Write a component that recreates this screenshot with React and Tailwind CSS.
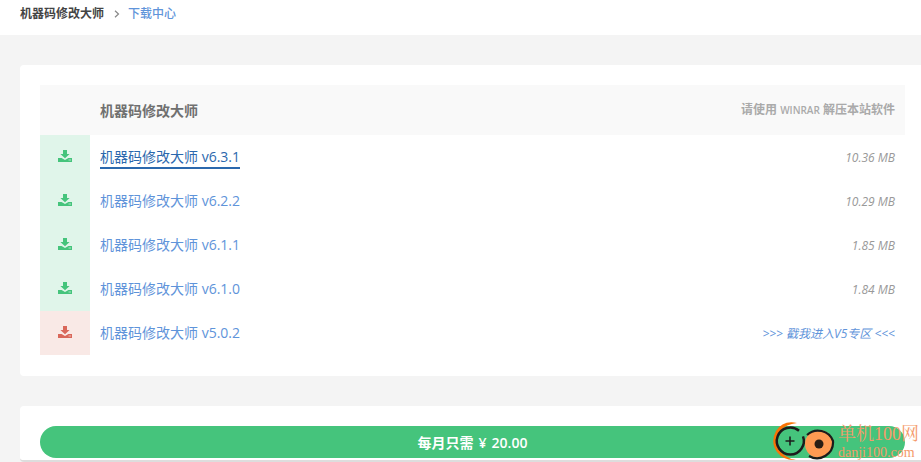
const FONT = "font-['Open_Sans','Noto_Sans_CJK_SC',sans-serif]";

const rows = [
  { name: "机器码修改大师 v6.3.1", size: "10.36 MB", active: true },
  { name: "机器码修改大师 v6.2.2", size: "10.29 MB" },
  { name: "机器码修改大师 v6.1.1", size: "1.85 MB" },
  { name: "机器码修改大师 v6.1.0", size: "1.84 MB" },
  { name: "机器码修改大师 v5.0.2", size: ">>> 戳我进入V5专区 <<<", old: true },
];

function DownloadIcon({ className }) {
  return (
    <svg viewBox="0 0 14 12" className={className} fill="currentColor">
      <path d="M5 0h4v4h2.6L7 8.2 2.4 4H5z" />
      <path d="M0 8h3.6L7 10l3.4-2H14v4H0z" />
      <rect x="10.5" y="9.6" width="2.5" height="0.8" fill="#ffffff" opacity="0.7" />
    </svg>
  );
}

function Row({ row }) {
  return (
    <div className="flex h-11 items-center">
      <div
        className={`flex h-11 w-[50px] shrink-0 items-center justify-center ${row.old ? "bg-[#f9e9e6] text-[#d9675a]" : "bg-[#e0f5ea] text-[#45c47c]"}`}
      >
        <DownloadIcon className="mb-[2px] h-3 w-[14px]" />
      </div>
      <a
        className={`ml-[10px] mt-[2px] text-[14px] leading-[20px] ${row.active ? "border-b-2 border-[#2b68ad] text-[#2b68ad]" : "border-b-2 border-transparent text-[#5f94da]"}`}
      >
        {row.name}
      </a>
      <span
        className={`ml-auto mr-[10px] mt-[1px] text-[12px] italic ${row.old ? "text-[#5f94da]" : "text-[#999999]"}`}
      >
        {row.size}
      </span>
    </div>
  );
}

function Watermark() {
  return (
    <div className="absolute bottom-0 right-0 h-[46px] w-[150px]">
      <svg width="88" height="46" viewBox="0 0 88 46" className="absolute left-0 top-0">
        <path d="M26 7Q12 4 5 15Q-1 26 6 36Q13 45 25 44Q13 42 8 33Q3 24 9 15Q15 8 26 7Z" fill="#f97306" />
        <path d="M32 20.4A13.5 13.5 0 1 1 28 14.7" fill="none" stroke="#1c1c1c" strokeWidth="2.5" />
        <path d="M14.5 25h9M19 20.5v9" stroke="#1c1c1c" strokeWidth="1.6" />
        <circle cx="48" cy="28" r="14" fill="#ff9a52" />
        <path d="M36 19 A16 16 0 0 1 62 25 A16 16 0 0 1 38 40" fill="none" stroke="#1c1c1c" strokeWidth="2.2" />
        <circle cx="48" cy="28" r="4.5" fill="#2b1d14" />
      </svg>
      <div className="absolute left-[67px] top-[8px] font-['Liberation_Serif','Noto_Serif_CJK_SC','Noto_Sans_CJK_SC',serif] text-[#f59a6a]">
        <div className="whitespace-nowrap text-[18px] leading-[20px]">单机100网</div>
        <div className="whitespace-nowrap text-[14px] leading-[17px]">danji100.com</div>
      </div>
    </div>
  );
}

export default function App() {
  return (
    <div className={`relative h-[462px] w-[921px] overflow-hidden bg-[#f4f4f4] ${FONT}`}>
      <div className="flex h-[35px] items-start bg-white pl-5 pt-[5px] text-[12px] leading-[17px]">
        <span className="font-semibold text-[#444444]">机器码修改大师</span>
        <svg viewBox="0 0 6 8" className="ml-[10px] mt-[5px] h-2 w-[6px]" fill="none" stroke="#888888" strokeWidth="1.2">
          <path d="M1 .7 4.5 4 1 7.3" />
        </svg>
        <span className="ml-[8px] font-medium text-[#5f94da]">下载中心</span>
      </div>

      <div className="ml-5 mt-[30px] rounded-l-[4px] bg-white pb-[21px] pl-5 pt-5 pr-4">
        <div className="flex h-[50px] items-center bg-[#f9f9f9] pl-[60px] pr-[10px]">
          <span className="text-[14px] font-semibold text-[#707070]">机器码修改大师</span>
          <span className="ml-auto text-[12px] font-semibold text-[#aaaaaa]">
            请使用 <span className="text-[10px]">WINRAR</span> 解压本站软件
          </span>
        </div>
        {rows.map((row) => (
          <Row key={row.name} row={row} />
        ))}
      </div>

      <div className="ml-5 mt-[30px] h-[56px] rounded-l-[4px] border-b-2 border-[#dddddd] bg-white pl-5 pr-4 pt-5">
        <div className="flex h-8 items-center justify-center rounded-full bg-[#45c47c] text-[14px] font-semibold text-white">
          每月只需 <span className="mx-[5px]">¥</span> <span>20.00</span>
        </div>
      </div>

      <Watermark />
    </div>
  );
}
